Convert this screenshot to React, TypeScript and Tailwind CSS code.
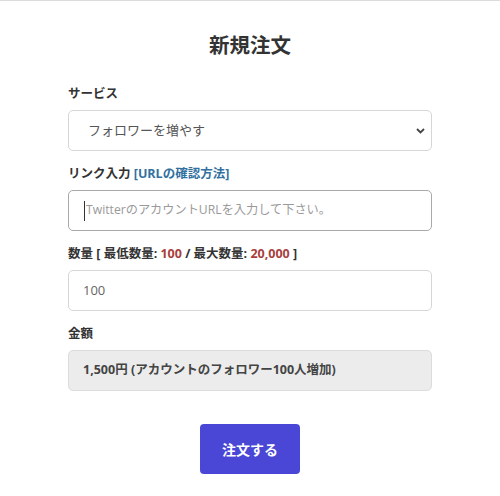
import React from "react";

const font = { fontFamily: '"Open Sans", "Noto Sans CJK JP", sans-serif' };

export default function App() {
  return (
    <div className="w-[500px] h-[496px] bg-white border-t border-[#dcdcdc] text-[#333]" style={font}>
      <div className="w-[364px] mx-auto pt-[30px]">
        <h1 className="text-center text-[20.5px] leading-[28px] font-bold text-[#333] mb-[25px]">新規注文</h1>

        <div className="text-[12.5px] leading-[20px] font-bold mb-[6px]">サービス</div>
        <div className="h-[41px] rounded-[5px] border border-[#d6d6d6] flex items-center justify-between pl-[19px] pr-[6px] mb-[13px]">
          <span className="text-[13px] text-[#555]">フォロワーを増やす</span>
          <svg width="9" height="6" viewBox="0 0 9 6" className="mt-[1px]">
            <path d="M1 1 L4.5 4.5 L8 1" fill="none" stroke="#444" strokeWidth="1.8" />
          </svg>
        </div>

        <div className="text-[12.5px] leading-[20px] font-bold mb-[6px]">
          リンク入力 <span className="text-[#32709f]">[URLの確認方法]</span>
        </div>
        <div className="h-[41px] rounded-[5px] border border-[#a9a9a9] flex items-center pl-[15px] mb-[13px]">
          <span className="w-px h-[20px] bg-[#333] mr-[1px]"></span>
          <span className="text-[12.2px] text-[#9a9a9a]">TwitterのアカウントURLを入力して下さい。</span>
        </div>

        <div className="text-[12.5px] leading-[20px] font-bold mb-[6px]">
          数量 [ 最低数量: <span className="text-[#a8403e]">100</span> / 最大数量:{" "}
          <span className="text-[#a8403e]">20,000</span> ]
        </div>
        <div className="h-[41px] rounded-[5px] border border-[#d6d6d6] flex items-center pl-[14px] mb-[13px]">
          <span className="text-[13px] text-[#666]">100</span>
        </div>

        <div className="text-[12.5px] leading-[20px] font-bold mb-[6px]">金額</div>
        <div className="h-[41px] rounded-[5px] border border-[#dcdcdc] bg-[#ececec] flex items-center pl-[14px]">
          <span className="text-[12.5px] font-bold text-[#444]">1,500円 (アカウントのフォロワー100人増加)</span>
        </div>

        <div className="flex justify-center mt-[33px]">
          <button className="w-[100px] h-[50px] rounded-[4px] bg-[#4a47d6] text-white font-bold text-[14px]">
            注文する
          </button>
        </div>
      </div>
    </div>
  );
}
